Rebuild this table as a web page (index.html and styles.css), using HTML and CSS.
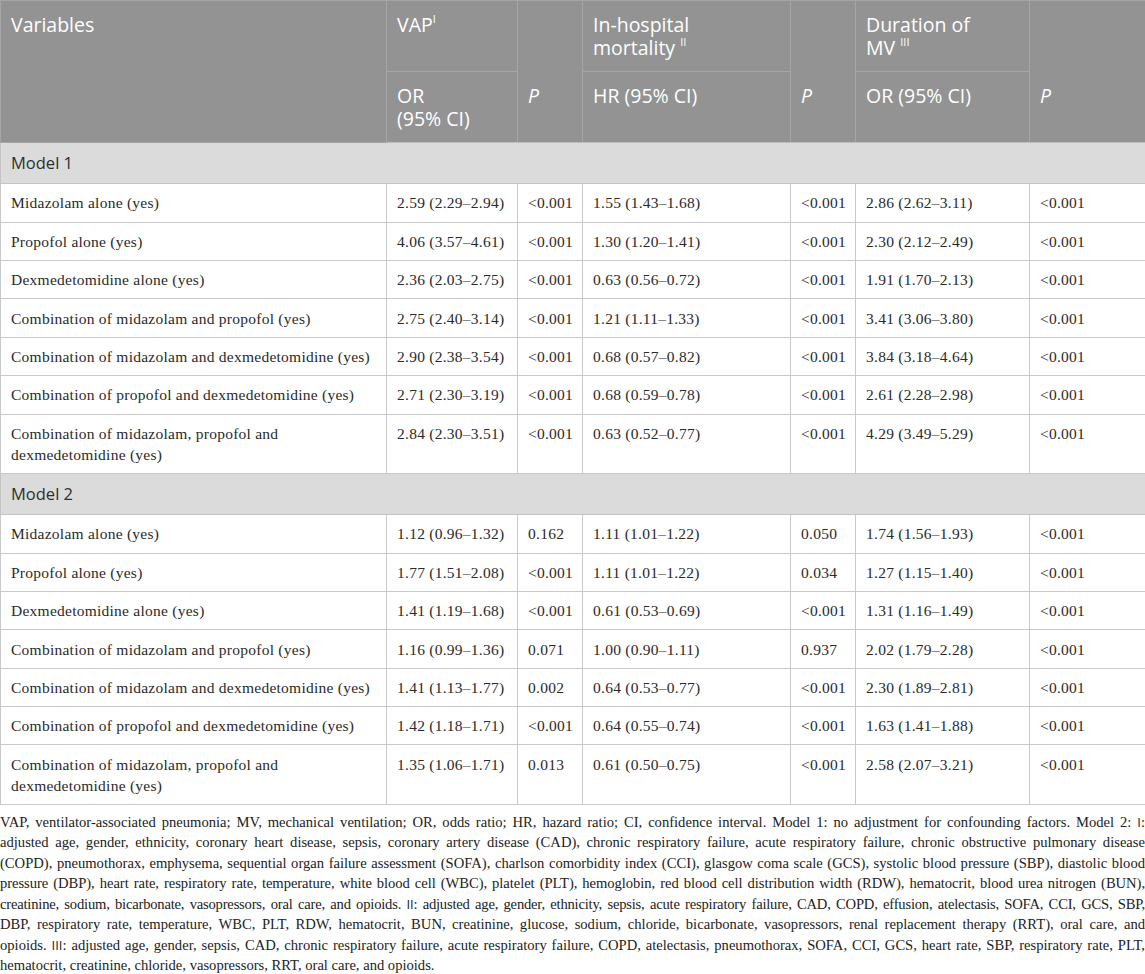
FILE: index.html
```html
<!DOCTYPE html>
<html lang="en">
<head>
<meta charset="utf-8">
<title>Table</title>
<link rel="stylesheet" href="styles.css">
</head>
<body>
<table class="tbl">
  <colgroup>
    <col class="c-var"><col class="c-or"><col class="c-p1"><col class="c-hr"><col class="c-p2"><col class="c-mv"><col class="c-p3">
  </colgroup>
  <thead>
    <tr>
      <th rowspan="2">Variables</th>
      <th>VAP<sup>I</sup></th>
      <th class="ptop"></th>
      <th>In-hospital<br>mortality <sup>II</sup></th>
      <th class="ptop"></th>
      <th>Duration of<br>MV <sup>III</sup></th>
      <th class="ptop"></th>
    </tr>
    <tr>
      <th>OR<br>(95% CI)</th>
      <th class="pbot"><i>P</i></th>
      <th>HR (95% CI)</th>
      <th class="pbot"><i>P</i></th>
      <th>OR (95% CI)</th>
      <th class="pbot"><i>P</i></th>
    </tr>
  </thead>
  <tbody>
    <tr class="model"><td colspan="7">Model 1</td></tr>
    <tr><td>Midazolam alone (yes)</td><td>2.59 (2.29–2.94)</td><td>&lt;0.001</td><td>1.55 (1.43–1.68)</td><td>&lt;0.001</td><td>2.86 (2.62–3.11)</td><td>&lt;0.001</td></tr>
    <tr><td>Propofol alone (yes)</td><td>4.06 (3.57–4.61)</td><td>&lt;0.001</td><td>1.30 (1.20–1.41)</td><td>&lt;0.001</td><td>2.30 (2.12–2.49)</td><td>&lt;0.001</td></tr>
    <tr><td>Dexmedetomidine alone (yes)</td><td>2.36 (2.03–2.75)</td><td>&lt;0.001</td><td>0.63 (0.56–0.72)</td><td>&lt;0.001</td><td>1.91 (1.70–2.13)</td><td>&lt;0.001</td></tr>
    <tr><td>Combination of midazolam and propofol (yes)</td><td>2.75 (2.40–3.14)</td><td>&lt;0.001</td><td>1.21 (1.11–1.33)</td><td>&lt;0.001</td><td>3.41 (3.06–3.80)</td><td>&lt;0.001</td></tr>
    <tr><td>Combination of midazolam and dexmedetomidine (yes)</td><td>2.90 (2.38–3.54)</td><td>&lt;0.001</td><td>0.68 (0.57–0.82)</td><td>&lt;0.001</td><td>3.84 (3.18–4.64)</td><td>&lt;0.001</td></tr>
    <tr><td>Combination of propofol and dexmedetomidine (yes)</td><td>2.71 (2.30–3.19)</td><td>&lt;0.001</td><td>0.68 (0.59–0.78)</td><td>&lt;0.001</td><td>2.61 (2.28–2.98)</td><td>&lt;0.001</td></tr>
    <tr><td>Combination of midazolam, propofol and dexmedetomidine (yes)</td><td>2.84 (2.30–3.51)</td><td>&lt;0.001</td><td>0.63 (0.52–0.77)</td><td>&lt;0.001</td><td>4.29 (3.49–5.29)</td><td>&lt;0.001</td></tr>
    <tr class="model"><td colspan="7">Model 2</td></tr>
    <tr><td>Midazolam alone (yes)</td><td>1.12 (0.96–1.32)</td><td>0.162</td><td>1.11 (1.01–1.22)</td><td>0.050</td><td>1.74 (1.56–1.93)</td><td>&lt;0.001</td></tr>
    <tr><td>Propofol alone (yes)</td><td>1.77 (1.51–2.08)</td><td>&lt;0.001</td><td>1.11 (1.01–1.22)</td><td>0.034</td><td>1.27 (1.15–1.40)</td><td>&lt;0.001</td></tr>
    <tr><td>Dexmedetomidine alone (yes)</td><td>1.41 (1.19–1.68)</td><td>&lt;0.001</td><td>0.61 (0.53–0.69)</td><td>&lt;0.001</td><td>1.31 (1.16–1.49)</td><td>&lt;0.001</td></tr>
    <tr><td>Combination of midazolam and propofol (yes)</td><td>1.16 (0.99–1.36)</td><td>0.071</td><td>1.00 (0.90–1.11)</td><td>0.937</td><td>2.02 (1.79–2.28)</td><td>&lt;0.001</td></tr>
    <tr><td>Combination of midazolam and dexmedetomidine (yes)</td><td>1.41 (1.13–1.77)</td><td>0.002</td><td>0.64 (0.53–0.77)</td><td>&lt;0.001</td><td>2.30 (1.89–2.81)</td><td>&lt;0.001</td></tr>
    <tr><td>Combination of propofol and dexmedetomidine (yes)</td><td>1.42 (1.18–1.71)</td><td>&lt;0.001</td><td>0.64 (0.55–0.74)</td><td>&lt;0.001</td><td>1.63 (1.41–1.88)</td><td>&lt;0.001</td></tr>
    <tr><td>Combination of midazolam, propofol and dexmedetomidine (yes)</td><td>1.35 (1.06–1.71)</td><td>0.013</td><td>0.61 (0.50–0.75)</td><td>&lt;0.001</td><td>2.58 (2.07–3.21)</td><td>&lt;0.001</td></tr>
  </tbody>
</table>
<div class="note">
  <span class="ln">VAP, ventilator-associated pneumonia; MV, mechanical ventilation; OR, odds ratio; HR, hazard ratio; CI, confidence interval. Model 1: no adjustment for confounding factors. Model 2: <span class="rn">I</span>:</span>
  <span class="ln">adjusted age, gender, ethnicity, coronary heart disease, sepsis, coronary artery disease (CAD), chronic respiratory failure, acute respiratory failure, chronic obstructive pulmonary disease</span>
  <span class="ln">(COPD), pneumothorax, emphysema, sequential organ failure assessment (SOFA), charlson comorbidity index (CCI), glasgow coma scale (GCS), systolic blood pressure (SBP), diastolic blood</span>
  <span class="ln tight">pressure (DBP), heart rate, respiratory rate, temperature, white blood cell (WBC), platelet (PLT), hemoglobin, red blood cell distribution width (RDW), hematocrit, blood urea nitrogen (BUN),</span>
  <span class="ln tighter">creatinine, sodium, bicarbonate, vasopressors, oral care, and opioids. <span class="rn">II</span>: adjusted age, gender, ethnicity, sepsis, acute respiratory failure, CAD, COPD, effusion, atelectasis, SOFA, CCI, GCS, SBP,</span>
  <span class="ln">DBP, respiratory rate, temperature, WBC, PLT, RDW, hematocrit, BUN, creatinine, glucose, sodium, chloride, bicarbonate, vasopressors, renal replacement therapy (RRT), oral care, and</span>
  <span class="ln">opioids. <span class="rn">III</span>: adjusted age, gender, sepsis, CAD, chronic respiratory failure, acute respiratory failure, COPD, atelectasis, pneumothorax, SOFA, CCI, GCS, heart rate, SBP, respiratory rate, PLT,</span>
  <span class="ln last">hematocrit, creatinine, chloride, vasopressors, RRT, oral care, and opioids.</span>
</div>
</body>
</html>
```

FILE: styles.css
```css
html, body {
  margin: 0;
  padding: 0;
  background: #ffffff;
}

.tbl {
  width: 1145px;
  border-collapse: collapse;
  table-layout: fixed;
  border: 1px solid #c6c6c6;
}

.c-var { width: 386px; }
.c-or  { width: 131px; }
.c-p1  { width: 65px; }
.c-hr  { width: 208px; }
.c-p2  { width: 65px; }
.c-mv  { width: 174px; }
.c-p3  { width: 116px; }

.tbl th {
  background: #939393;
  color: #ffffff;
  font-family: "Open Sans", "DejaVu Sans", sans-serif;
  font-weight: 400;
  font-size: 19.5px;
  line-height: 23px;
  text-align: left;
  vertical-align: top;
  padding: 12px 10px 12px 10px;
  border: 1px solid #a6a6a6;
  height: 46px;
}

.tbl th sup {
  font-size: 11px;
  line-height: 0;
  vertical-align: 9px;
}

.tbl th i {
  font-style: italic;
}

.tbl th.ptop {
  border-bottom: hidden;
}

.tbl th.pbot {
  border-top: hidden;
}

.tbl thead tr:last-child th {
  border-bottom: 1px solid #bdbdbd;
}

.tbl td {
  font-family: "Liberation Serif", "Times New Roman", serif;
  font-size: 15.5px;
  letter-spacing: 0.25px;
  line-height: 21px;
  color: #2a2a2a;
  padding: 8.2px 10px 8.2px 10px;
  border: 1px solid #c9c9c9;
  vertical-align: top;
  text-align: left;
}

.tbl .model td {
  background: #dadbda;
  font-family: "Open Sans", "DejaVu Sans", sans-serif;
  font-size: 16.5px;
  letter-spacing: 0;
  line-height: 22px;
  color: #2e2e2e;
  padding: 9.2px 10px 9.1px 10px;
  border-color: #c4c4c4;
}

.note {
  margin-top: 7px;
  font-family: "Liberation Serif", "Times New Roman", serif;
  font-size: 14.6px;
  line-height: 20.5px;
  color: #222222;
}

.note .ln {
  display: block;
  text-align: justify;
  text-align-last: justify;
}

.note .ln.tight {
  letter-spacing: -0.05px;
}

.note .ln.tighter {
  letter-spacing: -0.2px;
  word-spacing: -0.5px;
}

.note .ln.last {
  text-align-last: left;
}

.note .rn {
  font-family: "Open Sans", "DejaVu Sans", sans-serif;
  font-size: 13px;
}
```
